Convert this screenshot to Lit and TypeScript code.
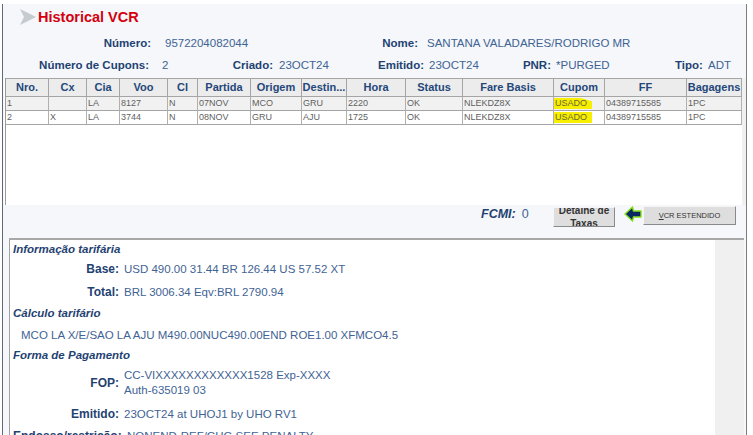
import { LitElement, html, css, unsafeCSS } from "lit";
import { customElement } from "lit/decorators.js";

const COLS = [
  ["Nro.", 43], ["Cx", 38], ["Cia", 33], ["Voo", 48], ["Cl", 30], ["Partida", 53], ["Origem", 51], ["Destin...", 45],
  ["Hora", 59], ["Status", 57], ["Fare Basis", 91], ["Cupom", 51], ["FF", 82], ["Bagagens", 55],
] as const;
const ROWS = [
  ["1", "", "LA", "8127", "N", "07NOV", "MCO", "GRU", "2220", "OK", "NLEKDZ8X", "USADO", "04389715585", "1PC"],
  ["2", "X", "LA", "3744", "N", "08NOV", "GRU", "AJU", "1725", "OK", "NLEKDZ8X", "USADO", "04389715585", "1PC"],
];
const TEMPLATE = COLS.map((c) => c[1] + "px").join(" ");

@customElement("app-root")
export class AppRoot extends LitElement {
  static styles = css`
    :host { display: block; width: 753px; height: 435px; overflow: hidden; background: #fff;
      font-family: "Liberation Sans", Arial, sans-serif; font-size: 11.5px; color: #3f6394; }
    .frame { margin: 4px 6px 0 2px; height: 431px; box-sizing: border-box; background: #f5f7fa;
      border-left: 1px solid #5d6b7c; border-right: 1px solid #7d7d7d; overflow: hidden; }
    .title { display: flex; align-items: center; height: 26px; padding-left: 16px; gap: 1px; }
    .title h1 { margin: 0; font-size: 14.5px; font-weight: bold; color: #d4000f; }
    .title svg { display: block; }
    .info { display: grid; align-items: center; height: 22px; }
    .i1 { grid-template-columns: 148px 14px 216px 37px 9px 1fr; margin-top: 2px; }
    .i2 { grid-template-columns: 146px 13px 68px 43px 6px 99px 44px 7px 93px 29px 5px 119px 27px 6px 1fr; }
    .lbl { font-weight: bold; color: #1f4272; text-align: right; white-space: nowrap; }
    .tablewrap { margin: 2px 0 0 1px; height: 127px; background: #fff; display: flex; }
    .tablebox { width: 736px; margin-left: 1px; border-left: 1px solid #9a9a9a; }
    .gutter { flex: 1; background: #f0f0f0; }
    .tr { display: grid; grid-template-columns: ${unsafeCSS(TEMPLATE)}; }
    .th { height: 17px; line-height: 17px; text-align: center; font-weight: bold; font-size: 11px; color: #24477a;
      background: #ececec; border-top: 1px solid #a5a5a5; border-bottom: 1px solid #a5a5a5; border-right: 1px solid #a5a5a5;
      white-space: nowrap; overflow: hidden; }
    .td { height: 13px; line-height: 13px; font-size: 9px; color: #5f5f5f; padding-left: 1px; border-right: 1px solid #b0b0b0;
      border-bottom: 1px solid #a5a5a5; white-space: nowrap; overflow: hidden; position: relative; }
    .r0 .td { background: #f1f1f1; }
    .r1 .td { background: #fff; }
    .td .mark { position: absolute; left: 0; top: 1px; width: 38px; height: 11px; background: #f7ee00; }
    .r0 .td .mark { clip-path: polygon(0 0, 70% 0, 100% 30%, 100% 100%, 0 100%); }
    .td .t { position: relative; color: #6a6a30; }
    .foot { display: flex; align-items: flex-start; height: 33px; padding-left: 478px; }
    .fcmi { width: 72px; display: flex; gap: 6px; padding-top: 2px; font-size: 12.5px; }
    .fcmi b { font-style: italic; color: #1f4272; }
    .btn { box-sizing: border-box; background: #dedede; border-style: solid; border-width: 1px;
      border-color: #f5f5f5 #8a8a8a #8a8a8a #f5f5f5; color: #333; font-family: inherit; padding: 0; overflow: hidden; }
    .tax { width: 62px; height: 20px; margin-top: 2px; font-size: 10px; font-weight: bold; line-height: 13px; text-align: center; color: #333; }
    .tax span { display: block; margin-top: -4px; }
    .arrow { margin: 1px 1px 0 9px; display: block; }
    .vcr { width: 93px; height: 19px; margin-top: 1px; font-size: 7.5px; line-height: 17px; text-align: center; }
    .vcr u { text-decoration: underline; }
    .lower { display: flex; height: 196px; margin-left: 6px; margin-right: 2px; border-top: 2px solid #a8a8a8; }
    .content { width: 706px; box-sizing: border-box; background: #fff; border-left: 1px solid #a0a0a0; padding: 1px 0 0 3px; overflow: hidden; }
    .side { flex: 1; background: #f0f0f0; }
    h2 { margin: 0; height: 21px; line-height: 17px; font-size: 11.5px; font-style: italic; font-weight: bold; color: #1f4272; }
    h2.calc-h { margin-top: 2px; }
    .row { display: grid; grid-template-columns: 106px 1fr; column-gap: 5px; align-items: center; min-height: 22px; }
    .row .lbl { font-size: 12px; }
    .calc { height: 21px; line-height: 18px; padding-left: 8px; white-space: nowrap; }
    .fop { line-height: 15px; min-height: 32px; margin-top: -1px; }
    .wide { grid-template-columns: 108px 1fr; column-gap: 6px; }
    .emit { margin-top: 4px; }
    .base { margin-top: -4px; }
    .total { margin-top: 1px; }
    .val { white-space: nowrap; }
  `;

  render() {
    return html`
      <div class="frame">
        <div class="title">
          <svg width="18" height="18" viewBox="0 0 18 18"><path d="M1 1 L17 9 L1 17 L5 9 Z" fill="#c6cbd0"/></svg>
          <h1>Historical VCR</h1>
        </div>
        <div class="info i1">
          <span class="lbl">Número:</span><span></span><span>9572204082044</span>
          <span class="lbl">Nome:</span><span></span><span>SANTANA VALADARES/RODRIGO MR</span>
        </div>
        <div class="info i2">
          <span class="lbl">Número de Cupons:</span><span></span><span>2</span>
          <span class="lbl">Criado:</span><span></span><span>23OCT24</span>
          <span class="lbl">Emitido:</span><span></span><span>23OCT24</span>
          <span class="lbl">PNR:</span><span></span><span>*PURGED</span>
          <span class="lbl">Tipo:</span><span></span><span>ADT</span>
        </div>
        <div class="tablewrap">
          <div class="tablebox">
            <div class="tr">${COLS.map((c) => html`<div class="th">${c[0]}</div>`)}</div>
            ${ROWS.map((r, i) => html`<div class="tr r${i}">
              ${r.map((v, j) => j === 11
                ? html`<div class="td"><span class="mark"></span><span class="t">${v}</span></div>`
                : html`<div class="td">${v}</div>`)}
            </div>`)}
          </div>
          <div class="gutter"></div>
        </div>
        <div class="foot">
          <div class="fcmi"><b>FCMI:</b><span>0</span></div>
          <button class="btn tax"><span>Detalhe de Taxas</span></button>
          <svg class="arrow" width="18" height="16" viewBox="0 0 18 16">
            <path d="M8.5 1 L1 8 L8.5 15 L9.5 11 L17 11 L17 5 L9.5 5 Z" fill="#0b2a63" stroke="#86e01a" stroke-width="1.4"/>
          </svg>
          <button class="btn vcr"><u>V</u>CR ESTENDIDO</button>
        </div>
        <div class="lower">
          <div class="content">
            <h2>Informação tarifária</h2>
            <div class="row base"><span class="lbl">Base:</span><span class="val">USD 490.00 31.44 BR 126.44 US 57.52 XT</span></div>
            <div class="row total"><span class="lbl">Total:</span><span class="val">BRL 3006.34 Eqv:BRL 2790.94</span></div>
            <h2 class="calc-h">Cálculo tarifário</h2>
            <div class="calc">MCO LA X/E/SAO LA AJU M490.00NUC490.00END ROE1.00 XFMCO4.5</div>
            <h2>Forma de Pagamento</h2>
            <div class="row fop"><span class="lbl">FOP:</span><span class="val">CC-VIXXXXXXXXXXXX1528 Exp-XXXX<br />Auth-635019 03</span></div>
            <div class="row emit"><span class="lbl">Emitido:</span><span class="val">23OCT24 at UHOJ1 by UHO RV1</span></div>
            <div class="row wide"><span class="lbl">Endosso/restrição:</span><span class="val">NONEND-REF/CHG SEE PENALTY</span></div>
          </div>
          <div class="side"></div>
        </div>
      </div>
    `;
  }
}
